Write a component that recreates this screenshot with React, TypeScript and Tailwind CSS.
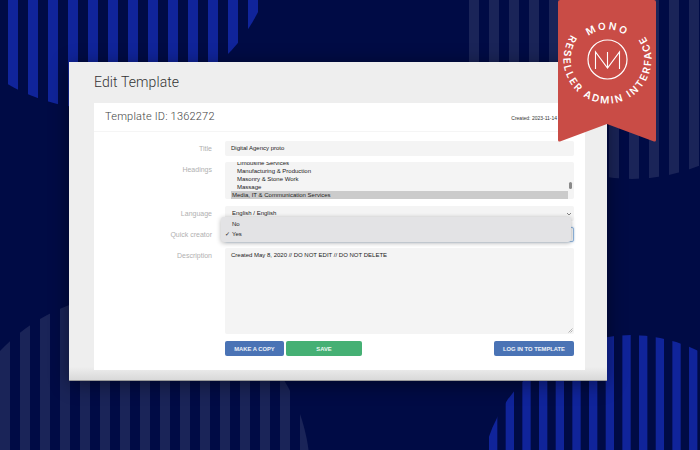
import React from 'react';

const range = (start: number, step: number, count: number) =>
  Array.from({ length: count }, (_, i) => start + i * step);

const Backdrop = () => (
  <svg className="absolute inset-0" width="700" height="450" viewBox="0 0 700 450">
    <defs>
      <clipPath id="tl"><circle cx="99" cy="-70" r="179" /></clipPath>
      <clipPath id="tr"><circle cx="632" cy="0" r="179" /></clipPath>
      <clipPath id="bl"><circle cx="131" cy="473" r="179" /></clipPath>
      <clipPath id="br"><circle cx="631" cy="485" r="150" /></clipPath>
    </defs>
    <g clipPath="url(#tl)" fill="#10249a">
      {range(8, 20, 13).map(x => <rect key={x} x={x} y="0" width="10" height="120" />)}
    </g>
    <g clipPath="url(#tr)" fill="#1a2458">
      {range(469, 20, 12).map(x => <rect key={x} x={x} y="0" width="10" height="190" />)}
    </g>
    <g clipPath="url(#bl)" fill="#1a2458">
      {range(0, 20, 16).map(x => <rect key={x} x={x} y="290" width="10" height="160" />)}
    </g>
    <g clipPath="url(#br)" fill="#10249a">
      {range(489, 16.67, 13).map(x => <rect key={x} x={x} y="330" width="8.33" height="120" />)}
    </g>
  </svg>
);

const Ribbon = () => (
  <svg className="absolute left-[558px] top-0" width="98" height="142" viewBox="0 0 98 142">
    <defs>
      <path id="arc-top" d="M 19.5 59.5 A 30 30 0 0 1 79.5 59.5" />
      <path id="arc-bottom" d="M 49.5 15.5 A 44 44 0 1 0 49.5 103.5 A 44 44 0 1 0 49.5 15.5" />
    </defs>
    <path d="M2 0 H96 Q98 0 98 2 V140 Q98 142 96 141.4 L49 124 L2 141.4 Q0 142 0 140 V2 Q0 0 2 0 Z" fill="#c94c46" />
    <g fill="white" className="font-['Inter',sans-serif] font-semibold">
      <text fontSize="10" letterSpacing="2.2" textAnchor="middle">
        <textPath href="#arc-top" startOffset="50%">MONO</textPath>
      </text>
      <text fontSize="10" letterSpacing="2" textAnchor="middle">
        <textPath href="#arc-bottom" startOffset="50%">RESELLER ADMIN INTERFACE</textPath>
      </text>
    </g>
    <circle cx="49.5" cy="59.5" r="19.5" fill="none" stroke="white" strokeWidth="1.2" />
    <path d="M37.5 69 V52 L49.5 68 L61.5 52 V69 M49.5 68 V52" fill="none" stroke="white" strokeWidth="1.1" />
  </svg>
);

const Row = ({ label, children, className }: { label: string; children: React.ReactNode; className?: string }) => (
  <div className={`flex ${className ?? ''}`}>
    <label className="w-[107px] h-[15px] text-right text-[7px] leading-[16px] text-[#b0b0b0] shrink-0">{label}</label>
    <div className="ml-[13px] w-[349px]">{children}</div>
  </div>
);

const headings = ['Limousine Services', 'Manufacturing & Production', 'Masonry & Stone Work', 'Massage'];

const App = () => {
  return (
    <div className="relative w-[700px] h-[450px] overflow-hidden bg-[#000b45] font-['Liberation_Sans',sans-serif]">
      <Backdrop />

      <div className="relative ml-[69px] mt-[62px] w-[538px] h-[319px] inline-block align-top bg-[#eeeeee] shadow-[0_3px_18px_rgba(0,0,0,0.45)]">
        <div className="absolute inset-x-0 bottom-0 h-[14px] bg-gradient-to-b from-[#eeeeee] to-[#d9d9d9] border-b border-[#9a9a9a]" />

        <div className="relative px-[25px]">
          <h1 className="h-[41px] pt-[11px] text-[14px] leading-[18px] text-[#333333] font-['Roboto',sans-serif] font-light tracking-[0.1px]">Edit Template</h1>

          <div className="w-[491px] h-[267px] bg-white">
            <div className="flex h-[29px] pl-[11px] border-b border-[#f5f5f5]">
              <span className="text-[11px] leading-[28px] text-[#444444] font-['Roboto',sans-serif] font-light tracking-[0.2px]">Template ID: 1362272</span>
              <span className="ml-auto mr-[14px] pt-[1px] text-[5px] leading-[28px] text-[#333333]">Created: 2023-11-14 12:00</span>
            </div>

            <div className="flex flex-col pt-[9px] pl-[11px]">
              <Row label="Title">
                <div className="h-[15px] rounded-[2px] bg-[#f4f4f4] pl-[6px] text-[6px] leading-[15px] text-[#222222]">Digital Agency proto</div>
              </Row>

              <Row label="Headings" className="mt-[6px]">
                <div className="relative h-[37px] rounded-[2px] bg-[#f4f4f4] overflow-hidden pl-[6px] text-[6px] leading-[8px] text-[#222222]">
                  <div className="-mt-[3px]">
                    {headings.map(h => <div key={h} className="pl-[6px]">{h}</div>)}
                    <div className="bg-[#cbcbcb] w-[337px] h-[8px] pl-[1px]">Media, IT &amp; Communication Services</div>
                  </div>
                  <div className="absolute right-[2px] top-[20px] w-[3px] h-[7px] rounded-full bg-[#8a8a8a]" />
                </div>
              </Row>

              <Row label="Language" className="mt-[7px]">
                <div className="flex items-center justify-between h-[15px] rounded-[2px] bg-[#f4f4f4] pl-[7px] pr-[2px] text-[6px] text-[#222222]">
                  <span>English / English</span>
                  <svg width="6" height="6" viewBox="0 0 6 6" fill="none" stroke="#666666" strokeWidth="0.8"><path d="M1 2 L3 4 L5 2" /></svg>
                </div>
              </Row>

              <Row label="Quick creator" className="mt-[6px]">
                <div className="h-[15px] rounded-[2px] bg-[#f4f4f4] border border-[#8fb4dc] shadow-[0_0_2px_#a9c8e8]" />
              </Row>

              <Row label="Description" className="mt-[6px]">
                <div className="relative h-[86px] rounded-[2px] bg-[#f4f4f4] pl-[6px] pt-[1px] text-[6px] leading-[13px] text-[#222222]">
                  Created May 8, 2020 // DO NOT EDIT // DO NOT DELETE
                  <svg className="absolute right-[1px] bottom-[1px]" width="5" height="5" viewBox="0 0 5 5" stroke="#888888" strokeWidth="0.6"><path d="M0.5 4.5 L4.5 0.5 M2.5 4.5 L4.5 2.5" /></svg>
                </div>
              </Row>

              <div className="flex mt-[7px] ml-[120px] w-[349px] gap-[2px] text-[5.8px] font-bold text-white/90 leading-[14px] text-center">
                <button className="w-[59px] h-[15px] rounded-[2px] bg-[#4a73b5]">MAKE A COPY</button>
                <button className="w-[76px] h-[15px] rounded-[2px] bg-[#45b074]">SAVE</button>
                <button className="ml-auto w-[80px] h-[15px] rounded-[2px] bg-[#4a73b5]">LOG IN TO TEMPLATE</button>
              </div>
            </div>
          </div>
        </div>

        {/* open native select menu */}
        <div className="absolute left-[152px] top-[155px] w-[350px] h-[25px] rounded-[3px] bg-[#e3e3e5] shadow-[0_1px_5px_rgba(0,0,0,0.3)] text-[6px] leading-[10px] text-[#222222] pt-[2px]">
          <div className="pl-[11px]">No</div>
          <div className="relative pl-[11px]">
            <span className="absolute left-[4px]">✓</span>
            Yes
          </div>
        </div>
      </div>

      <Ribbon />
    </div>
  );
};

export default App;
